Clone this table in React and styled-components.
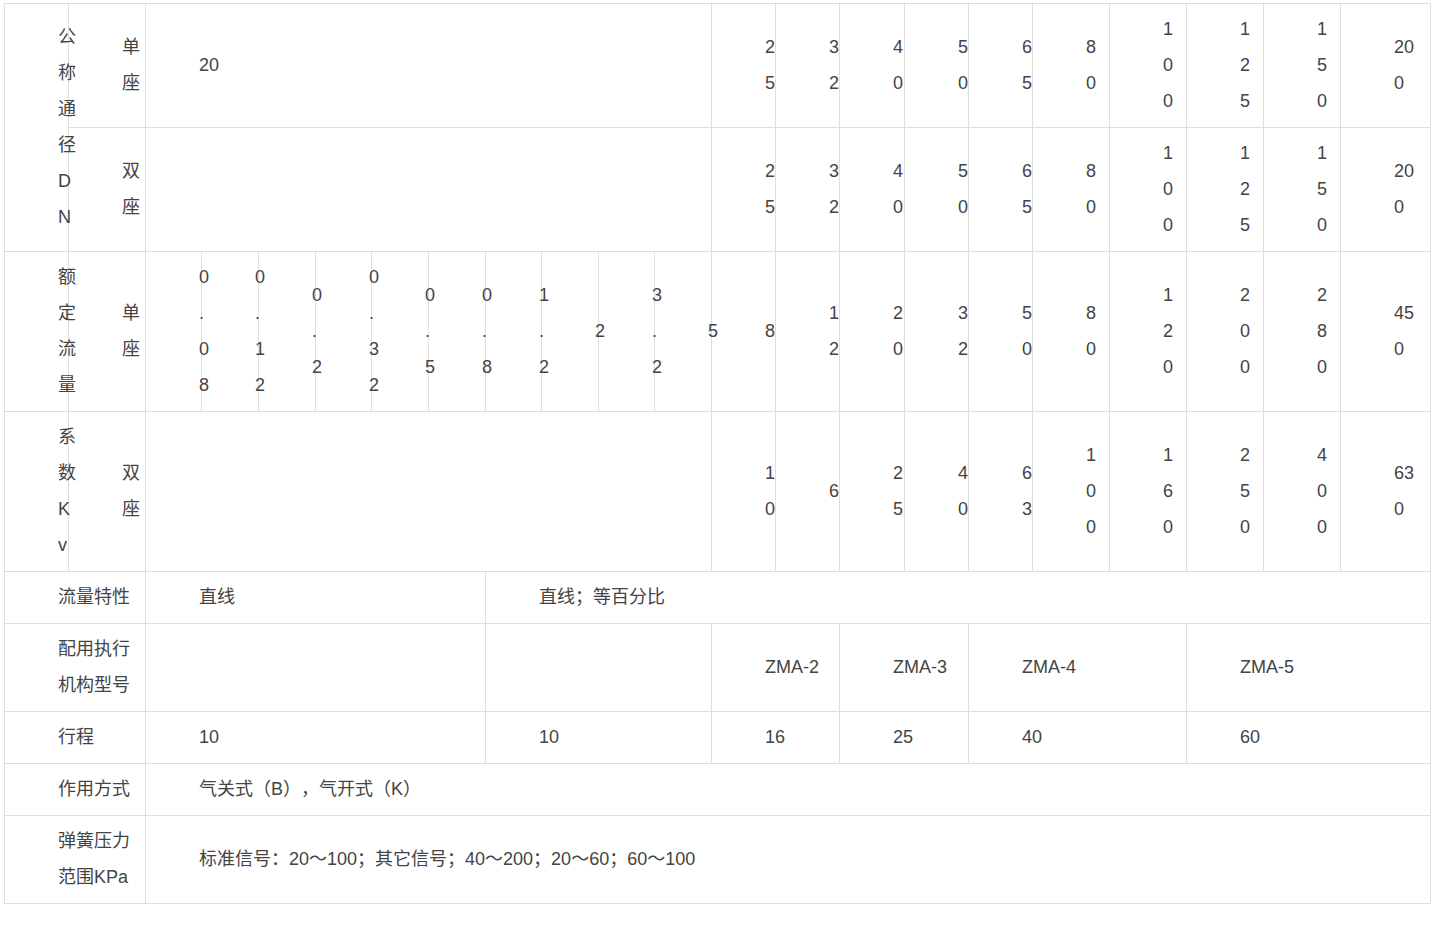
import React from "react";
import styled, { createGlobalStyle } from "styled-components";

const GlobalStyle = createGlobalStyle`
  html, body {
    margin: 0;
    padding: 0;
    background: #ffffff;
  }
  body {
    font-family: "Liberation Sans", Arial, "Noto Sans CJK SC", sans-serif;
  }
`;

const Page = styled.div`
  padding: 3px 0 0 4px;
`;

const SpecGrid = styled.div`
  display: inline-grid;
  grid-template-columns:
    63px 76px
    55px 56px 56px 55px 56px 56px 55px 56px 55px 56px
    63px 63px 64px 63px 63px 76px 76px 76px 76px 89px;
  grid-template-rows: 123px 123px 159px 159px 51px 87px 51px 51px 87px;
  gap: 1px;
  padding: 1px;
  background: #dedede;
`;

const Cell = styled.div`
  grid-column: ${(p) => p.$col} / span ${(p) => p.$cs || 1};
  grid-row: ${(p) => p.$row} / span ${(p) => p.$rs || 1};
  background: #ffffff;
  display: flex;
  align-items: center;
  min-width: 0;
  padding-bottom: 2px;
  box-sizing: border-box;
`;

const CellText = styled.span`
  position: relative;
  z-index: 1;
  margin-left: 53px;
  margin-right: 9px;
  font-size: 18px;
  line-height: 36px;
  color: #444444;
  word-break: break-all;
  overflow-wrap: anywhere;
  white-space: normal;
  text-spacing-trim: space-all;
`;

const bigDN = ["25", "32", "40", "50", "65", "80", "100", "125", "150", "200"];
const kvSingle = [
  "0.08", "0.12", "0.2", "0.32", "0.5", "0.8", "1.2", "2", "3.2", "5",
  "8", "12", "20", "32", "50", "80", "120", "200", "280", "450",
];
const kvDouble = ["10", "6", "25", "40", "63", "100", "160", "250", "400", "630"];

const cells = [
  { row: 1, col: 1, rs: 2, text: "公称通径DN" },
  { row: 1, col: 2, text: "单座" },
  { row: 1, col: 3, cs: 10, text: "20" },
  ...bigDN.map((t, i) => ({ row: 1, col: 13 + i, text: t })),
  { row: 2, col: 2, text: "双座" },
  { row: 2, col: 3, cs: 10, text: "" },
  ...bigDN.map((t, i) => ({ row: 2, col: 13 + i, text: t })),
  { row: 3, col: 1, text: "额定流量" },
  { row: 3, col: 2, text: "单座" },
  ...kvSingle.map((t, i) => ({ row: 3, col: 3 + i, text: t })),
  { row: 4, col: 1, text: "系数Kv" },
  { row: 4, col: 2, text: "双座" },
  { row: 4, col: 3, cs: 10, text: "" },
  ...kvDouble.map((t, i) => ({ row: 4, col: 13 + i, text: t })),
  { row: 5, col: 1, cs: 2, text: "流量特性" },
  { row: 5, col: 3, cs: 6, text: "直线" },
  { row: 5, col: 9, cs: 14, text: "直线；等百分比" },
  { row: 6, col: 1, cs: 2, text: "配用执行机构型号" },
  { row: 6, col: 3, cs: 6, text: "" },
  { row: 6, col: 9, cs: 4, text: "" },
  { row: 6, col: 13, cs: 2, text: "ZMA-2" },
  { row: 6, col: 15, cs: 2, text: "ZMA-3" },
  { row: 6, col: 17, cs: 3, text: "ZMA-4" },
  { row: 6, col: 20, cs: 3, text: "ZMA-5" },
  { row: 7, col: 1, cs: 2, text: "行程" },
  { row: 7, col: 3, cs: 6, text: "10" },
  { row: 7, col: 9, cs: 4, text: "10" },
  { row: 7, col: 13, cs: 2, text: "16" },
  { row: 7, col: 15, cs: 2, text: "25" },
  { row: 7, col: 17, cs: 3, text: "40" },
  { row: 7, col: 20, cs: 3, text: "60" },
  { row: 8, col: 1, cs: 2, text: "作用方式" },
  { row: 8, col: 3, cs: 20, text: "气关式（B），气开式（K）" },
  { row: 9, col: 1, cs: 2, text: "弹簧压力范围KPa" },
  {
    row: 9,
    col: 3,
    cs: 20,
    text: "标准信号：20～100；其它信号；40～200；20～60；60～100",
  },
];

export default function App() {
  return (
    <>
      <GlobalStyle />
      <Page>
        <SpecGrid>
          {cells.map((c, i) => (
            <Cell key={i} $row={c.row} $col={c.col} $rs={c.rs} $cs={c.cs}>
              {c.text ? <CellText>{c.text}</CellText> : null}
            </Cell>
          ))}
        </SpecGrid>
      </Page>
    </>
  );
}
